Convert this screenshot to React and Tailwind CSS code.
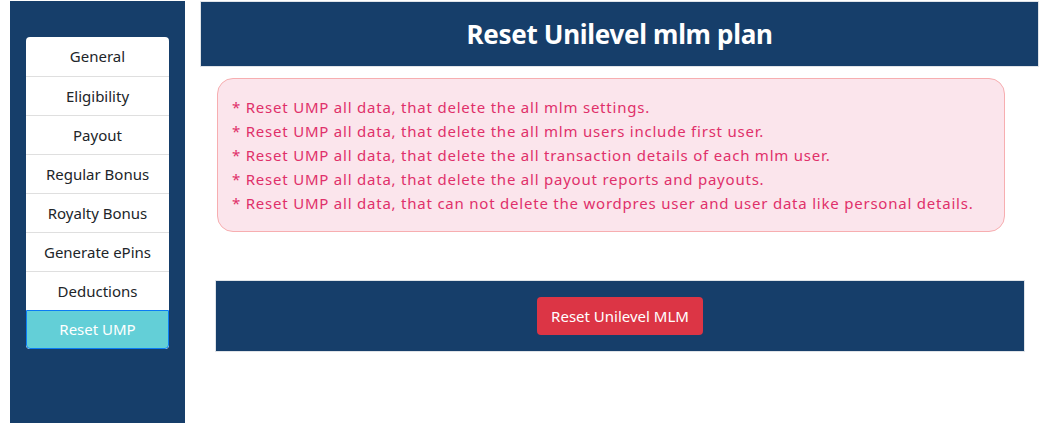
import React from "react";

const items = [
  "General",
  "Eligibility",
  "Payout",
  "Regular Bonus",
  "Royalty Bonus",
  "Generate ePins",
  "Deductions",
];

const lines = [
  "* Reset UMP all data, that delete the all mlm settings.",
  "* Reset UMP all data, that delete the all mlm users include first user.",
  "* Reset UMP all data, that delete the all transaction details of each mlm user.",
  "* Reset UMP all data, that delete the all payout reports and payouts.",
  "* Reset UMP all data, that can not delete the wordpres user and user data like personal details.",
];

export default function App() {
  return (
    <div
      className="w-[1056px] h-[423px] bg-white flex items-stretch pt-px overflow-hidden"
      style={{ fontFamily: '"Noto Sans", "Open Sans", sans-serif' }}
    >
      <aside className="ml-[10px] w-[175px] shrink-0 bg-[#163e6a] pt-[36px] px-4">
        <div className="bg-white rounded-[4px] overflow-hidden">
          {items.map((t, i) => (
            <div
              key={t}
              className={`h-[39px] flex items-center justify-center text-[15px] text-[#212529] ${
                i > 0 ? "border-t border-[#dfdfdf]" : ""
              }`}
            >
              {t}
            </div>
          ))}
          <div className="h-[39px] flex items-center justify-center text-[15px] text-white bg-[#63cfd7] border border-[#0b7cf5] rounded-b-[4px]">
            Reset UMP
          </div>
        </div>
      </aside>
      <main className="ml-[15px] w-[839px] flex flex-col">
        <div className="h-[66px] bg-[#163e6a] border border-[#dfe3e8] flex items-center justify-center">
          <h1 className="text-[26px] font-bold text-white tracking-[-0.3px]">
            Reset Unilevel mlm plan
          </h1>
        </div>
        <div className="mt-[11px] ml-[17px] w-[788px] h-[154px] rounded-[16px] bg-[#fbe5ec] border border-[#f7aeb0] pl-[14px] pt-[16px]">
          {lines.map((l) => (
            <p key={l} className="text-[15px] leading-[24px] text-[#e0306a] tracking-[0.78px] whitespace-nowrap">
              {l}
            </p>
          ))}
        </div>
        <div className="mt-[48px] ml-[15px] w-[810px] h-[72px] bg-[#163e6a] border border-[#dfe3e8] flex items-center justify-center">
          <button className="h-[38px] px-[14px] rounded-[4px] bg-[#dc3545] text-white text-[15px]">
            Reset Unilevel MLM
          </button>
        </div>
      </main>
    </div>
  );
}
